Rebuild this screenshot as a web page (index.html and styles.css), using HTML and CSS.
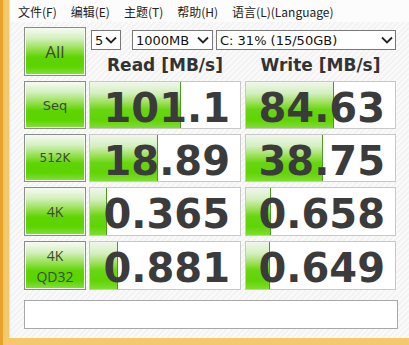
FILE: index.html
```html
<!DOCTYPE html>
<html>
	<head>
		<meta charset="UTF-8">
		<title>CrystalDiskMark</title>
		<link rel="stylesheet" href="styles.css">
	</head>
	<body>
		<div class="main">
			<div class="menubar">
				<span>文件(F)</span>
				<span>编辑(E)</span>
				<span>主题(T)</span>
				<span>帮助(H)</span>
				<span>语言(L)(Language)</span>
			</div>
			<div class="client">
				<div class="grid">
					<div class="btn btn-all">All</div>
					<div class="top">
						<div class="selects">
							<div class="combo combo-count">5<svg class="chev" viewBox="0 0 12 8"><polyline points="1,1.5 6,6.5 11,1.5"/></svg></div>
							<div class="combo combo-size">1000MB<svg class="chev" viewBox="0 0 12 8"><polyline points="1,1.5 6,6.5 11,1.5"/></svg></div>
							<div class="combo combo-drive">C: 31% (15/50GB)<svg class="chev" viewBox="0 0 12 8"><polyline points="1,1.5 6,6.5 11,1.5"/></svg></div>
						</div>
						<div class="heads">
							<div class="head">Read [MB/s]</div>
							<div class="head">Write [MB/s]</div>
						</div>
					</div>

					<div class="btn btn-seq">Seq</div>
					<div class="bar"><div class="fill" style="width: 91px"></div><span class="num">101.1</span></div>
					<div class="bar"><div class="fill" style="width: 88px"></div><span class="num">84.63</span></div>

					<div class="btn btn-512">512K</div>
					<div class="bar"><div class="fill" style="width: 68px"></div><span class="num">18.89</span></div>
					<div class="bar"><div class="fill" style="width: 77px"></div><span class="num">38.75</span></div>

					<div class="btn btn-4k">4K</div>
					<div class="bar"><div class="fill" style="width: 17px"></div><span class="num">0.365</span></div>
					<div class="bar"><div class="fill" style="width: 25px"></div><span class="num">0.658</span></div>

					<div class="btn btn-4k btn-qd">4K<br>QD32</div>
					<div class="bar"><div class="fill" style="width: 28px"></div><span class="num">0.881</span></div>
					<div class="bar"><div class="fill" style="width: 24px"></div><span class="num">0.649</span></div>
				</div>
				<div class="status"></div>
			</div>
		</div>
	</body>
</html>
```

FILE: styles.css
```css
html, body {
	margin: 0;
	padding: 0;
}
body {
	width: 409px;
	height: 345px;
	overflow: hidden;
	background: linear-gradient(to right, #eaa22a 0, #eaa22a 3px, #f5c86c 3px);
}
.main {
	margin-left: 9px;
	height: 338px;
	border-left: 1px solid #f9e2b4;
	display: flex;
	flex-direction: column;
	background-color: #f6f6f6;
	background-image: repeating-linear-gradient(-45deg, #fafafa 0, #fafafa 2px, #f3f3f3 2px, #f3f3f3 4px);
}
.menubar {
	height: 22px;
	display: flex;
	align-items: center;
	gap: 14px;
	padding-left: 8px;
	background: #fcfcfc;
	font-family: "Noto Sans CJK SC", sans-serif;
	font-size: 12px;
	color: #222;
}
.client {
	flex: 1;
	padding: 5px 0 0 14px;
}
.grid {
	display: grid;
	grid-template-columns: 61px 152px 151px;
	grid-template-rows: 49px 48px 48px 49px 49px;
	column-gap: 4px;
	row-gap: 5px;
}
.btn {
	margin-right: -1px;
	box-sizing: border-box;
	border: 1px solid #8c8c8c;
	box-shadow: inset 0 0 0 1px #f4fbee;
	background: linear-gradient(to bottom, #f6fbf2 0%, #d4f0c0 22%, #94e04e 45%, #5ed402 62%, #5cd400 82%, #86e03c 100%);
	display: flex;
	align-items: center;
	justify-content: center;
	text-align: center;
	color: #3d4a36;
	font-family: "DejaVu Sans", sans-serif;
	font-size: 13px;
	line-height: 17px;
}
.btn-all {
	font-family: "Open Sans", sans-serif;
	font-size: 17px;
}
.btn-seq {
	font-family: "DejaVu Sans", sans-serif;
	font-size: 13px;
}
.btn-512 {
	font-size: 12px;
}
.btn-4k {
	font-family: "Open Sans", sans-serif;
	font-size: 14px;
}
.btn-qd {
	line-height: 21px;
}
.top {
	grid-column: 2 / 4;
	display: flex;
	flex-direction: column;
	padding-top: 3px;
}
.selects {
	display: flex;
	height: 20px;
	padding-left: 2px;
}
.combo {
	box-sizing: border-box;
	height: 20px;
	border: 1px solid #787878;
	background: #fff;
	display: flex;
	align-items: center;
	justify-content: space-between;
	padding: 0 3px 0 3px;
	font-family: "DejaVu Sans", sans-serif;
	font-size: 13px;
	color: #111;
}
.combo-count {
	width: 30px;
}
.combo-size {
	width: 81px;
	margin-left: 11px;
}
.combo-drive {
	width: 180px;
	margin-left: 3px;
	padding-right: 2px;
}
.chev {
	width: 12px;
	height: 8px;
	fill: none;
	stroke: #222;
	stroke-width: 1.8;
}
.heads {
	display: flex;
	margin-top: 5px;
}
.head {
	text-align: center;
	font-family: "DejaVu Sans", sans-serif;
	font-weight: bold;
	font-size: 17px;
	color: #333;
}
.head:first-child {
	width: 152px;
}
.head:last-child {
	width: 151px;
	margin-left: 4px;
}
.bar {
	position: relative;
	box-sizing: border-box;
	border: 1px solid #c8c8c8;
	background: #fff;
	display: flex;
	align-items: center;
	justify-content: flex-end;
	padding: 5px 10px 0 0;
}
.fill {
	position: absolute;
	left: 0;
	top: 0;
	bottom: 0;
	box-sizing: border-box;
	border-right: 1px solid #4c9a22;
	background: linear-gradient(to bottom, #f0f7ec 0%, #d2efbd 25%, #9ce058 45%, #68d612 60%, #60d404 82%, #7ede30 100%);
}
.num {
	position: relative;
	font-family: "DejaVu Sans", sans-serif;
	font-weight: bold;
	font-size: 40px;
	line-height: 40px;
	color: #3b3b3b;
}
.status {
	margin-top: 10px;
	width: 374px;
	height: 29px;
	box-sizing: border-box;
	border: 1px solid #a8a8a8;
	background: #fff;
}
```
